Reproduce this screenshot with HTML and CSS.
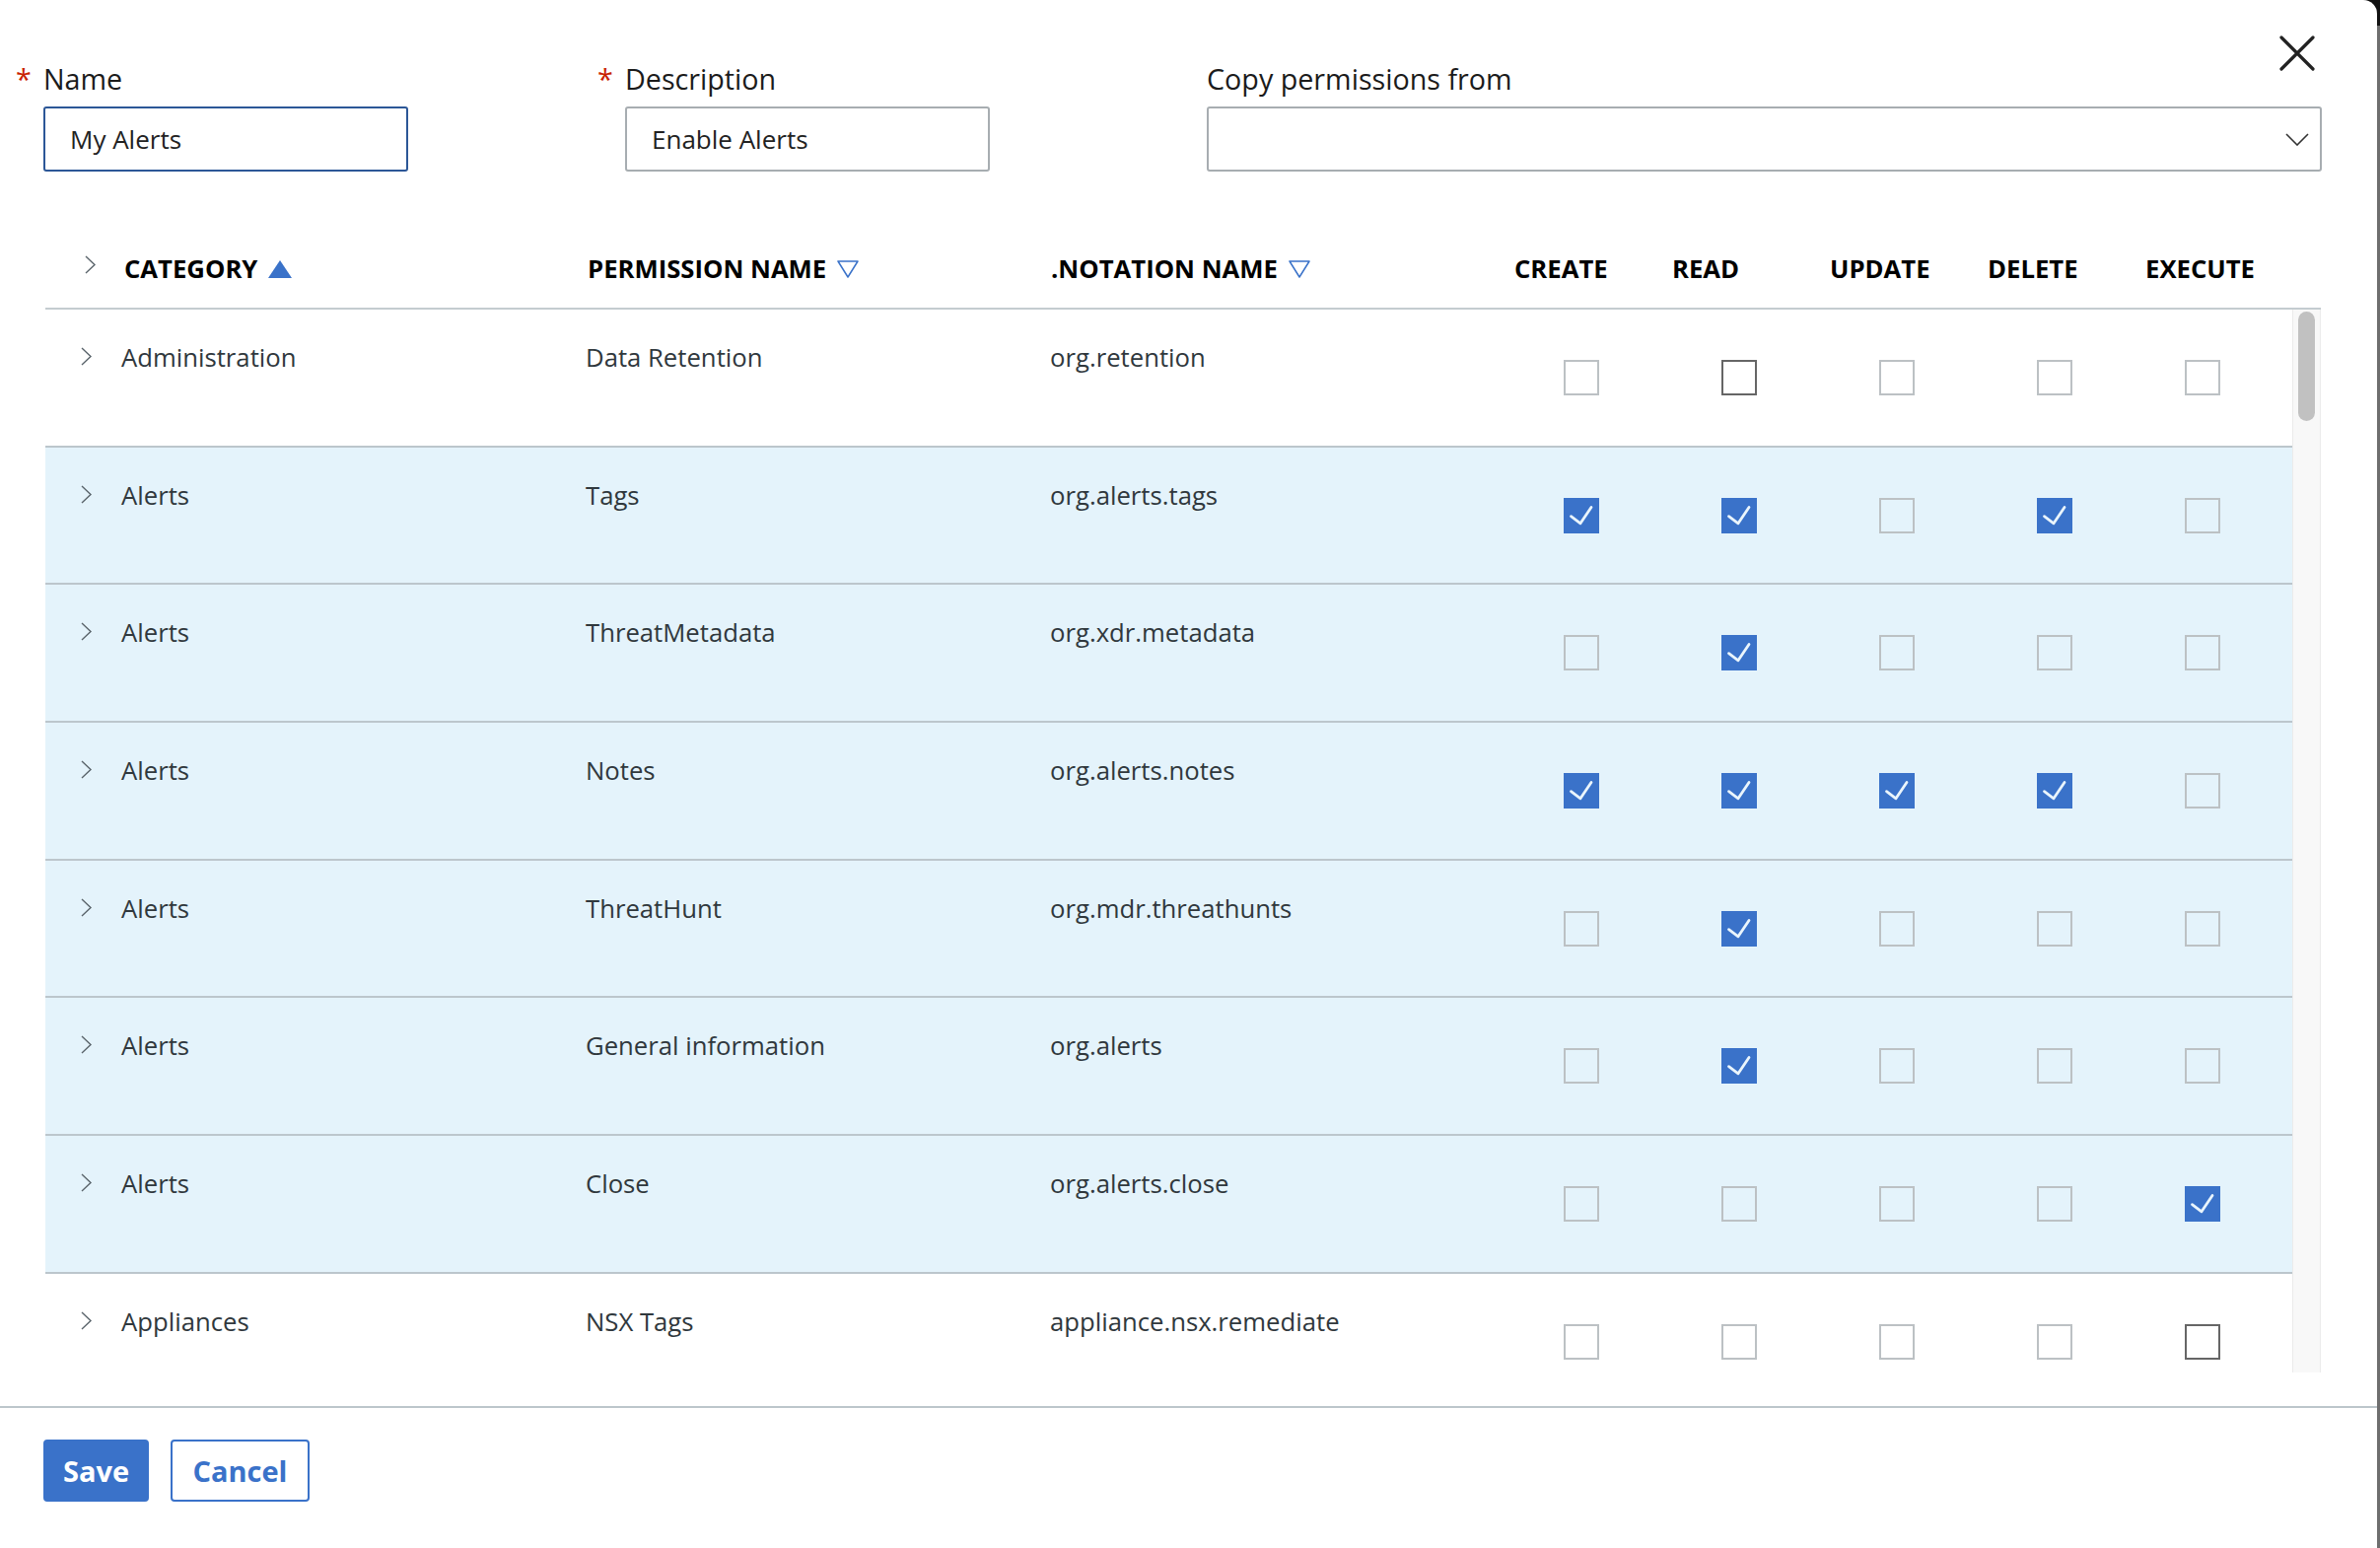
FILE: index.html
```html
<!DOCTYPE html>
<html lang="en">
<head>
<meta charset="utf-8">
<title>Edit Role Permissions</title>
<link rel="stylesheet" href="styles.css">
</head>
<body>
<div class="modal">
  <button class="close" aria-label="Close">
    <svg width="36" height="36" viewBox="0 0 36 36"><path d="M2 2 L34 34 M34 2 L2 34" stroke="#222" stroke-width="3.2" stroke-linecap="round" fill="none"/></svg>
  </button>

  <div class="form-row">
    <div class="field field-short">
      <div class="label"><span class="req">*</span>Name</div>
      <div class="input focused">My Alerts</div>
    </div>
    <div class="field field-short">
      <div class="label"><span class="req">*</span>Description</div>
      <div class="input">Enable Alerts</div>
    </div>
    <div class="field field-long">
      <div class="label">Copy permissions from</div>
      <div class="input select">
        <svg width="24" height="13" viewBox="0 0 24 13"><path d="M1 1 L12 12 L23 1" stroke="#333" stroke-width="1.6" fill="none"/></svg>
      </div>
    </div>
  </div>

  <div class="table">
    <div class="thead grid">
      <div class="h-chev"><svg width="11" height="19" viewBox="0 0 11 19"><path d="M1 1 L10 9.5 L1 18" stroke="#5a646b" stroke-width="1.4" fill="none"/></svg></div>
      <div class="h-text h-cat">CATEGORY<svg class="sort" width="24" height="18" viewBox="0 0 24 18"><polygon points="0,18 12,0 24,18" fill="#3a72c9"/></svg></div>
      <div class="h-text h-perm">PERMISSION NAME<svg class="sort" width="22" height="18" viewBox="0 0 22 18"><polygon points="1,1 21,1 11,17" fill="none" stroke="#3a72c9" stroke-width="1.5" stroke-linejoin="round"/></svg></div>
      <div class="h-text h-not">.NOTATION NAME<svg class="sort" width="22" height="18" viewBox="0 0 22 18"><polygon points="1,1 21,1 11,17" fill="none" stroke="#3a72c9" stroke-width="1.5" stroke-linejoin="round"/></svg></div>
      <div class="h-text h-op">CREATE</div>
      <div class="h-text h-op">READ</div>
      <div class="h-text h-op">UPDATE</div>
      <div class="h-text h-op">DELETE</div>
      <div class="h-text h-op">EXECUTE</div>
      <div></div>
    </div>

    <div class="tbody">
      <div class="rows">
        <div class="row grid">
          <div class="chev"><svg width="11" height="19" viewBox="0 0 11 19"><path d="M1 1 L10 9.5 L1 18" stroke="#5a646b" stroke-width="1.4" fill="none"/></svg></div>
          <div class="txt">Administration</div>
          <div class="txt">Data Retention</div>
          <div class="txt">org.retention</div>
          <div class="cbc"><span class="cb"></span></div>
          <div class="cbc"><span class="cb dark"></span></div>
          <div class="cbc"><span class="cb"></span></div>
          <div class="cbc"><span class="cb"></span></div>
          <div class="cbc"><span class="cb"></span></div>
          <div></div>
        </div>

        <div class="row grid sel">
          <div class="chev"><svg width="11" height="19" viewBox="0 0 11 19"><path d="M1 1 L10 9.5 L1 18" stroke="#5a646b" stroke-width="1.4" fill="none"/></svg></div>
          <div class="txt">Alerts</div>
          <div class="txt">Tags</div>
          <div class="txt">org.alerts.tags</div>
          <div class="cbc"><span class="cb on"><svg width="36" height="36" viewBox="0 0 36 36"><path d="M7.5 18.7 L17 25.8 L28 9.5" fill="none" stroke="#eaf5fc" stroke-width="2.8" stroke-linecap="round" stroke-linejoin="round"/></svg></span></div>
          <div class="cbc"><span class="cb on"><svg width="36" height="36" viewBox="0 0 36 36"><path d="M7.5 18.7 L17 25.8 L28 9.5" fill="none" stroke="#eaf5fc" stroke-width="2.8" stroke-linecap="round" stroke-linejoin="round"/></svg></span></div>
          <div class="cbc"><span class="cb"></span></div>
          <div class="cbc"><span class="cb on"><svg width="36" height="36" viewBox="0 0 36 36"><path d="M7.5 18.7 L17 25.8 L28 9.5" fill="none" stroke="#eaf5fc" stroke-width="2.8" stroke-linecap="round" stroke-linejoin="round"/></svg></span></div>
          <div class="cbc"><span class="cb"></span></div>
          <div></div>
        </div>

        <div class="row grid sel">
          <div class="chev"><svg width="11" height="19" viewBox="0 0 11 19"><path d="M1 1 L10 9.5 L1 18" stroke="#5a646b" stroke-width="1.4" fill="none"/></svg></div>
          <div class="txt">Alerts</div>
          <div class="txt">ThreatMetadata</div>
          <div class="txt">org.xdr.metadata</div>
          <div class="cbc"><span class="cb"></span></div>
          <div class="cbc"><span class="cb on"><svg width="36" height="36" viewBox="0 0 36 36"><path d="M7.5 18.7 L17 25.8 L28 9.5" fill="none" stroke="#eaf5fc" stroke-width="2.8" stroke-linecap="round" stroke-linejoin="round"/></svg></span></div>
          <div class="cbc"><span class="cb"></span></div>
          <div class="cbc"><span class="cb"></span></div>
          <div class="cbc"><span class="cb"></span></div>
          <div></div>
        </div>

        <div class="row grid sel">
          <div class="chev"><svg width="11" height="19" viewBox="0 0 11 19"><path d="M1 1 L10 9.5 L1 18" stroke="#5a646b" stroke-width="1.4" fill="none"/></svg></div>
          <div class="txt">Alerts</div>
          <div class="txt">Notes</div>
          <div class="txt">org.alerts.notes</div>
          <div class="cbc"><span class="cb on"><svg width="36" height="36" viewBox="0 0 36 36"><path d="M7.5 18.7 L17 25.8 L28 9.5" fill="none" stroke="#eaf5fc" stroke-width="2.8" stroke-linecap="round" stroke-linejoin="round"/></svg></span></div>
          <div class="cbc"><span class="cb on"><svg width="36" height="36" viewBox="0 0 36 36"><path d="M7.5 18.7 L17 25.8 L28 9.5" fill="none" stroke="#eaf5fc" stroke-width="2.8" stroke-linecap="round" stroke-linejoin="round"/></svg></span></div>
          <div class="cbc"><span class="cb on"><svg width="36" height="36" viewBox="0 0 36 36"><path d="M7.5 18.7 L17 25.8 L28 9.5" fill="none" stroke="#eaf5fc" stroke-width="2.8" stroke-linecap="round" stroke-linejoin="round"/></svg></span></div>
          <div class="cbc"><span class="cb on"><svg width="36" height="36" viewBox="0 0 36 36"><path d="M7.5 18.7 L17 25.8 L28 9.5" fill="none" stroke="#eaf5fc" stroke-width="2.8" stroke-linecap="round" stroke-linejoin="round"/></svg></span></div>
          <div class="cbc"><span class="cb"></span></div>
          <div></div>
        </div>

        <div class="row grid sel">
          <div class="chev"><svg width="11" height="19" viewBox="0 0 11 19"><path d="M1 1 L10 9.5 L1 18" stroke="#5a646b" stroke-width="1.4" fill="none"/></svg></div>
          <div class="txt">Alerts</div>
          <div class="txt">ThreatHunt</div>
          <div class="txt">org.mdr.threathunts</div>
          <div class="cbc"><span class="cb"></span></div>
          <div class="cbc"><span class="cb on"><svg width="36" height="36" viewBox="0 0 36 36"><path d="M7.5 18.7 L17 25.8 L28 9.5" fill="none" stroke="#eaf5fc" stroke-width="2.8" stroke-linecap="round" stroke-linejoin="round"/></svg></span></div>
          <div class="cbc"><span class="cb"></span></div>
          <div class="cbc"><span class="cb"></span></div>
          <div class="cbc"><span class="cb"></span></div>
          <div></div>
        </div>

        <div class="row grid sel">
          <div class="chev"><svg width="11" height="19" viewBox="0 0 11 19"><path d="M1 1 L10 9.5 L1 18" stroke="#5a646b" stroke-width="1.4" fill="none"/></svg></div>
          <div class="txt">Alerts</div>
          <div class="txt">General information</div>
          <div class="txt">org.alerts</div>
          <div class="cbc"><span class="cb"></span></div>
          <div class="cbc"><span class="cb on"><svg width="36" height="36" viewBox="0 0 36 36"><path d="M7.5 18.7 L17 25.8 L28 9.5" fill="none" stroke="#eaf5fc" stroke-width="2.8" stroke-linecap="round" stroke-linejoin="round"/></svg></span></div>
          <div class="cbc"><span class="cb"></span></div>
          <div class="cbc"><span class="cb"></span></div>
          <div class="cbc"><span class="cb"></span></div>
          <div></div>
        </div>

        <div class="row grid sel">
          <div class="chev"><svg width="11" height="19" viewBox="0 0 11 19"><path d="M1 1 L10 9.5 L1 18" stroke="#5a646b" stroke-width="1.4" fill="none"/></svg></div>
          <div class="txt">Alerts</div>
          <div class="txt">Close</div>
          <div class="txt">org.alerts.close</div>
          <div class="cbc"><span class="cb"></span></div>
          <div class="cbc"><span class="cb"></span></div>
          <div class="cbc"><span class="cb"></span></div>
          <div class="cbc"><span class="cb"></span></div>
          <div class="cbc"><span class="cb on"><svg width="36" height="36" viewBox="0 0 36 36"><path d="M7.5 18.7 L17 25.8 L28 9.5" fill="none" stroke="#eaf5fc" stroke-width="2.8" stroke-linecap="round" stroke-linejoin="round"/></svg></span></div>
          <div></div>
        </div>

        <div class="row grid">
          <div class="chev"><svg width="11" height="19" viewBox="0 0 11 19"><path d="M1 1 L10 9.5 L1 18" stroke="#5a646b" stroke-width="1.4" fill="none"/></svg></div>
          <div class="txt">Appliances</div>
          <div class="txt">NSX Tags</div>
          <div class="txt">appliance.nsx.remediate</div>
          <div class="cbc"><span class="cb"></span></div>
          <div class="cbc"><span class="cb"></span></div>
          <div class="cbc"><span class="cb"></span></div>
          <div class="cbc"><span class="cb"></span></div>
          <div class="cbc"><span class="cb dark"></span></div>
          <div></div>
        </div>
      </div>
      <div class="scrollbar"><div class="thumb"></div></div>
    </div>
  </div>

  <div class="footer">
    <button class="btn btn-primary">Save</button>
    <button class="btn btn-outline">Cancel</button>
  </div>
</div>
</body>
</html>
```

FILE: styles.css
```css
* {
  box-sizing: border-box;
}

html,
body {
  margin: 0;
  padding: 0;
}

body {
  width: 2414px;
  height: 1570px;
  overflow: hidden;
  background: linear-gradient(#111 0, #111 26px, #6e6e6e 26px);
  font-family: "Open Sans", "Noto Sans", "Liberation Sans", sans-serif;
}

.modal {
  position: relative;
  width: 2411px;
  height: 1570px;
  background: #fff;
  border-top-right-radius: 14px;
  display: flex;
  flex-direction: column;
}

.close {
  position: absolute;
  top: 36px;
  left: 2312px;
  width: 36px;
  height: 36px;
  padding: 0;
  border: 0;
  background: none;
}

.close svg {
  display: block;
}

/* ---------- form ---------- */

.form-row {
  display: flex;
  gap: 220px;
  padding: 61px 0 0 44px;
}

.field-short {
  width: 370px;
}

.field-long {
  width: 1131px;
}

.label {
  font-size: 28.7px;
  line-height: 38px;
  color: #1b1b1b;
  margin-bottom: 9px;
  white-space: nowrap;
}

.req {
  display: inline-block;
  width: 28px;
  margin-left: -28px;
  color: #c92100;
}

.input {
  height: 66px;
  border: 2px solid #a7adb1;
  border-radius: 3px;
  padding: 13px 25px;
  font-size: 26px;
  line-height: 36px;
  color: #222;
}

.input.focused {
  border-color: #2c5797;
}

.select {
  display: flex;
  align-items: center;
  justify-content: flex-end;
  padding: 0 11px 0 0;
}

.select svg {
  display: block;
}

/* ---------- table ---------- */

.table {
  margin: 58px 0 0 46px;
  width: 2308px;
}

.grid {
  display: grid;
  grid-template-columns: 77px 471px 471px 459px 160px 160px 160px 160px 140px 1fr;
}

.thead {
  height: 82px;
  padding-top: 23px;
  border-bottom: 2px solid #c4ccd0;
  font-size: 25.7px;
  line-height: 36px;
  font-weight: 700;
  color: #000;
}

.h-chev {
  padding: 4px 0 0 40px;
}

.h-chev svg,
.chev svg {
  display: block;
}

.h-text {
  white-space: nowrap;
}

.h-cat {
  padding-left: 3px;
}

.h-perm {
  padding-left: 2px;
}

.h-not {
  padding-left: 1px;
}

.h-op {
  padding-left: 12px;
}

.sort {
  margin-left: 11px;
}

.tbody {
  display: flex;
  height: 1078px;
}

.rows {
  width: 2279px;
  height: 1078px;
  overflow: hidden;
}

.row {
  height: 139.7px;
  border-bottom: 2px solid #bcc6cc;
  font-size: 25.7px;
  line-height: 36px;
  color: #30383d;
}

.row.sel {
  background: #e4f3fb;
}

.chev {
  padding: 38px 0 0 36px;
}

.txt {
  padding-top: 31px;
  white-space: nowrap;
}

.cbc {
  display: flex;
  align-items: center;
  justify-content: center;
}

.cb {
  display: block;
  width: 36px;
  height: 36px;
  border: 2px solid #bcc1c4;
}

.cb.dark {
  border-color: #666;
}

.cb.on {
  border: 0;
  background: #3a72c9;
}

.cb.on svg {
  display: block;
}

.scrollbar {
  width: 29px;
  height: 1078px;
  background: #f8f8f8;
  border-left: 1px solid #ebebeb;
  border-right: 1px solid #ebebeb;
  padding: 2px 0 0 5px;
}

.thumb {
  width: 17px;
  height: 111px;
  border-radius: 9px;
  background: #c1c1c1;
}

/* ---------- footer ---------- */

.footer {
  margin-top: 34px;
  border-top: 2px solid #bcc6cb;
  padding: 32px 0 0 44px;
  display: flex;
  gap: 22px;
}

.btn {
  height: 63px;
  border: 2px solid #3a72c9;
  border-radius: 4px;
  padding: 0;
  font-family: "Open Sans", "Noto Sans", "Liberation Sans", sans-serif;
  font-size: 29px;
  font-weight: 700;
  line-height: 59px;
  text-align: center;
}

.btn-primary {
  width: 107px;
  background: #3a72c9;
  color: #fff;
}

.btn-outline {
  width: 141px;
  background: #fff;
  color: #3a72c9;
}
```
